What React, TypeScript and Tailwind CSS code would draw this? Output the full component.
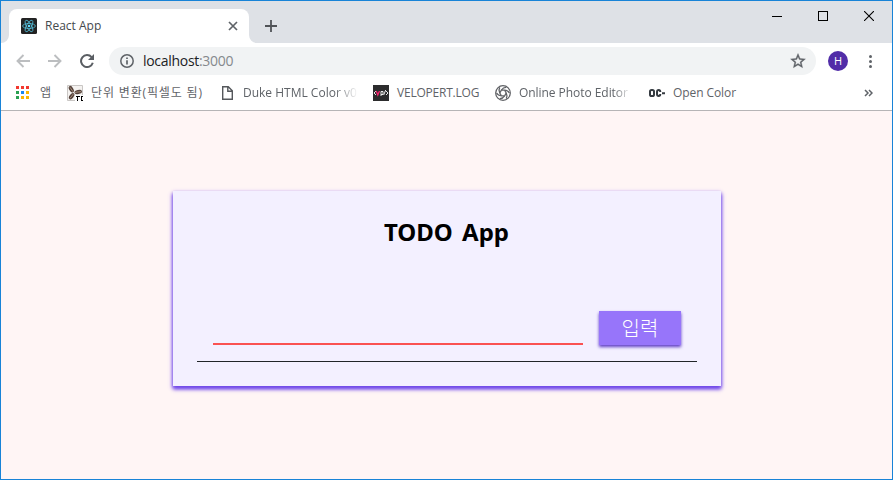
import type { ReactNode } from 'react';

const appDots = [
  'bg-[#f2382f]', 'bg-[#f2382f]', 'bg-[#f2382f]',
  'bg-[#2aa052]', 'bg-[#1a86f0]', 'bg-[#fbb400]',
  'bg-[#2aa052]', 'bg-[#fbb400]', 'bg-[#fbb400]',
];

function ReactLogo() {
  return (
    <svg width="16" height="16" viewBox="0 0 16 16" fill="none" className="shrink-0">
      <rect width="16" height="16" rx="1.5" fill="#222" />
      <g stroke="#53bcd6" strokeWidth="0.8">
        <ellipse cx="8" cy="8" rx="6.4" ry="2.5" />
        <ellipse cx="8" cy="8" rx="6.4" ry="2.5" transform="rotate(60 8 8)" />
        <ellipse cx="8" cy="8" rx="6.4" ry="2.5" transform="rotate(120 8 8)" />
      </g>
      <circle cx="8" cy="8" r="1.3" fill="#61dafb" />
    </svg>
  );
}

function TabStrip() {
  return (
    <div className="flex h-[42px] items-end bg-[#dee1e6]">
      <svg width="8" height="8" viewBox="0 0 8 8" className="shrink-0">
        <path d="M8 0v8H0a8 8 0 0 0 8-8Z" fill="#fff" />
      </svg>
      <div className="flex h-[34px] w-60 items-center rounded-t-lg bg-white pl-3 pr-[11px]">
        <ReactLogo />
        <span className="ml-2 flex-1 text-[12px] text-[#45494d]">React App</span>
        <svg width="10" height="10" viewBox="0 0 10 10" stroke="#5f6368" strokeWidth="1.7">
          <path d="m1 1 8 8M9 1 1 9" />
        </svg>
      </div>
      <svg width="8" height="8" viewBox="0 0 8 8" className="shrink-0">
        <path d="M0 0v8h8a8 8 0 0 1-8-8Z" fill="#fff" />
      </svg>
      <svg width="12" height="12" viewBox="0 0 12 12" stroke="#505357" strokeWidth="1.8" className="mb-[11px] ml-2">
        <path d="M6 0v12M0 6h12" />
      </svg>
      <div className="mb-[22px] ml-auto mr-[18px] flex gap-9 text-black">
        <svg width="10" height="10" viewBox="0 0 10 10" fill="none" stroke="currentColor" shapeRendering="crispEdges">
          <path d="M0 5.5h10" />
        </svg>
        <svg width="10" height="10" viewBox="0 0 10 10" fill="none" stroke="currentColor" shapeRendering="crispEdges">
          <path d="M.5.5h9v9h-9z" />
        </svg>
        <svg width="10" height="10" viewBox="0 0 10 10" fill="none" stroke="currentColor" strokeWidth="1.1">
          <path d="m0 0 10 10M10 0 0 10" />
        </svg>
      </div>
    </div>
  );
}

function Toolbar() {
  return (
    <div className="flex h-9 items-center bg-white pl-[15px] pr-5">
      <svg width="14" height="14" viewBox="0 0 14 14" fill="none" stroke="#bcbec0" strokeWidth="1.9">
        <path d="M14 7H1.5M7.5 1 1.5 7l6 6" />
      </svg>
      <svg width="14" height="14" viewBox="0 0 14 14" fill="none" stroke="#bcbec0" strokeWidth="1.9" className="ml-[18px]">
        <path d="M0 7h12.5M6.5 1l6 6-6 6" />
      </svg>
      <svg width="14" height="14" viewBox="0 0 14 14" fill="none" className="ml-[18px]">
        <path d="M11.6 3.1A6 6 0 1 0 12.8 8.8" stroke="#5a5e63" strokeWidth="2" />
        <path d="M14 0v6H8Z" fill="#5a5e63" />
      </svg>
      <div className="ml-[15px] flex h-7 w-[707px] items-center rounded-full bg-[#f1f3f4] pl-[11px] pr-[10px]">
        <svg width="14" height="14" viewBox="0 0 14 14" fill="none" stroke="#5f6368" strokeWidth="1.5">
          <circle cx="7" cy="7" r="6.2" />
          <path d="M7 6.2v4.3M7 3.4v1.5" strokeWidth="1.7" />
        </svg>
        <span className="ml-[9px] flex-1 pb-px text-[14px] tracking-[-0.3px] text-[#202124]">
          localhost<span className="text-[#85898d]">:3000</span>
        </span>
        <svg width="16" height="16" viewBox="1.2 1.2 21.6 21.6" fill="#5f6368">
          <path d="m22 9.24-7.19-.62L12 2 9.19 8.63 2 9.24l5.46 4.73L5.82 21 12 17.27 18.18 21l-1.63-7.03L22 9.24ZM12 15.4l-3.76 2.27 1-4.28-3.32-2.88 4.38-.38L12 6.1l1.71 4.04 4.38.38-3.32 2.88 1 4.28L12 15.4Z" stroke="#5f6368" strokeWidth=".5" />
        </svg>
      </div>
      <div className="ml-3 flex size-5 items-center justify-center rounded-full bg-[#512da8] text-[11px] text-white">H</div>
      <div className="ml-auto flex flex-col gap-[2px]">
        <span className="size-[3px] rounded-full bg-[#5f6368]" />
        <span className="size-[3px] rounded-full bg-[#5f6368]" />
        <span className="size-[3px] rounded-full bg-[#5f6368]" />
      </div>
    </div>
  );
}

function Bookmark({ icon, className, label }: { icon: ReactNode; className: string; label: string }) {
  return (
    <div className="flex shrink-0 items-center gap-2">
      {icon}
      <span className={`block whitespace-nowrap ${className}`}>{label}</span>
    </div>
  );
}

function Bookmarks() {
  return (
    <div className="flex h-8 items-center border-b border-[#b6b4b6] bg-white pb-[3px] pl-[15px] pr-[19px] text-[12px] text-[#5f6368]">
      <div className="mb-0.5 grid grid-cols-3 gap-[2px]">
        {appDots.map((color, i) => (
          <span key={i} className={`size-[3px] ${color}`} />
        ))}
      </div>
      <span className="ml-[11px] w-[17px]">앱</span>
      <div className="ml-[10px] flex">
        <Bookmark
          className="w-[128px] tracking-[0.85px]"
          label="단위 변환(픽셀도 됨)"
          icon={
            <svg width="16" height="16" viewBox="0 0 16 16">
              <path d="M.5.5h15v15H.5z" fill="#f4f2f0" stroke="#c9c6c4" />
              <g fill="#54423a">
                <ellipse cx="4.3" cy="4.2" rx="2" ry="3.6" transform="rotate(-32 4.3 4.2)" />
                <ellipse cx="11.2" cy="7" rx="3.8" ry="2" transform="rotate(-12 11.2 7)" />
                <ellipse cx="4.6" cy="11.2" rx="2" ry="3.6" transform="rotate(38 4.6 11.2)" />
              </g>
              <path d="m3 2.3 3 4.4M14 6.6 8 7.4M3 13.3l3.5-4.5" stroke="#b89d8a" strokeWidth=".8" />
              <path d="M8 10h8v6H8z" fill="#fff" />
              <path d="M8.5 11.5h4M10.5 11v5M16 11.5h-1.5v4H16" fill="none" stroke="#000" shapeRendering="crispEdges" />
            </svg>
          }
        />
        <Bookmark
          className="mr-[15px] w-[115px] mask-r-from-80% mask-r-to-100%"
          label="Duke HTML Color v0"
          icon={
            <svg width="16" height="16" viewBox="0 0 16 16" fill="none" stroke="#55585c" strokeWidth="1.4">
              <path d="M3.7 1.7h5.6l4 4v8.6H3.7zM8.8 1.7v4.5h4.5" />
            </svg>
          }
        />
        <Bookmark
          className="w-[98px] tracking-[-0.22px]"
          label="VELOPERT.LOG"
          icon={
            <svg width="16" height="16" viewBox="0 0 16 16" fill="none">
              <path d="M0 0h16v16H0z" fill="#2c2c2d" />
              <path d="m3 6-2 2 2 2M13 6l2 2-2 2M12.7 5l-2 5M8 11V6.5h2v3H8" stroke="#fff" strokeWidth=".9" />
              <path d="m3.2 6 1.6 4L6.5 6" stroke="#f5226e" strokeWidth="1.3" />
            </svg>
          }
        />
        <Bookmark
          className="mr-[18px] w-[112px] tracking-[-0.05px] mask-r-from-85% mask-r-to-100%"
          label="Online Photo Editor"
          icon={
            <svg width="16" height="16" viewBox="0 0 16 16" fill="none" stroke="#606266" strokeWidth="1.3">
              <circle cx="8" cy="8" r="7.3" />
              {[0, 60, 120, 180, 240, 300].map((angle) => (
                <path key={angle} d="M6.4 5.2 9.6 5.2Q13 5.4 14.4 8" transform={`rotate(${angle} 8 8)`} />
              ))}
            </svg>
          }
        />
        <Bookmark
          className="w-[80px] tracking-[-0.08px]"
          label="Open Color"
          icon={
            <svg width="16" height="16" viewBox="0 0 16 16" fill="none" stroke="#343a40" strokeWidth="2">
              <rect x="1" y="5" width="4" height="6" rx="1.6" />
              <path d="M11.3 6.9Q11.3 5 9.7 5 8 5 8 7v2q0 2 1.7 2 1.6 0 1.6-1.9M13 8.3h3" />
            </svg>
          }
        />
      </div>
      <svg width="9" height="8" viewBox="0 0 9 8" fill="none" stroke="#5f6368" strokeWidth="1.5" className="ml-auto">
        <path d="m1 1 3 3-3 3M5 1l3 3-3 3" />
      </svg>
    </div>
  );
}

function TodoCard() {
  return (
    <section className="h-[195px] w-[548px] bg-[#f3f0ff] px-6 pt-[25px] shadow-[0_3px_4px_#7048e8,0_2px_4px_#7950f2]">
      <h1 className="text-center font-['Noto_Sans','Noto_Sans_CJK_KR',sans-serif] text-[24px] leading-8 font-bold text-black [word-spacing:3px]">TODO App</h1>
      <form className="mt-[63px] flex h-[51px] items-start border-b border-[#212529] px-4" onSubmit={(e) => e.preventDefault()}>
        <input aria-label="할 일" className="h-[34px] w-[370px] border-b-2 border-[#fa5252] bg-transparent outline-none" />
        <button className="ml-4 h-[34px] w-[82px] bg-[#9775fa] pl-px text-[20px] leading-[35px] font-light text-white shadow-[0_2px_3px_#5f3dc4]">입력</button>
      </form>
    </section>
  );
}

export default function App() {
  return (
    <div className="flex h-[480px] w-[893px] flex-col overflow-hidden border border-[#1883d7] bg-[#fff5f5] font-['Open_Sans','Noto_Sans_CJK_KR',sans-serif]">
      <TabStrip />
      <Toolbar />
      <Bookmarks />
      <main className="flex flex-1 justify-center pt-20">
        <TodoCard />
      </main>
    </div>
  );
}
